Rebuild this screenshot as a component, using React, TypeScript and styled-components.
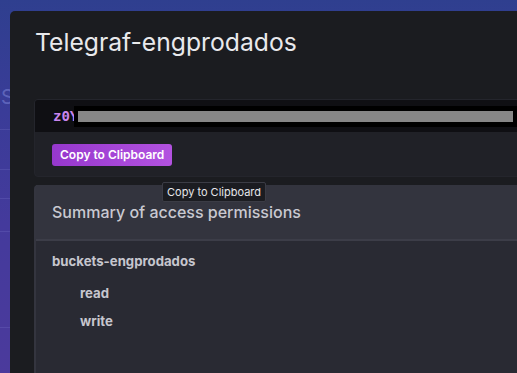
import React from "react";
import styled, { createGlobalStyle } from "styled-components";

const Global = createGlobalStyle`
  html, body { margin: 0; padding: 0; }
  body {
    width: 517px;
    height: 373px;
    overflow: hidden;
    font-family: Inter, Roboto, Arial, sans-serif;
  }
`;

const Page = styled.div`
  position: relative;
  width: 517px;
  height: 373px;
  overflow: hidden;
  background: linear-gradient(180deg, #2f3f8f 0%, #3a3c98 30%, #443a9c 60%, #4b3a9c 100%);
`;

const Backdrop = styled.div`
  display: flex;
  flex-direction: column;
  padding-top: 86px;
`;

const BackdropLabel = styled.div`
  font-size: 20px;
  color: rgba(140, 150, 230, 0.45);
  padding-left: 1px;
  height: 43px;
  line-height: 22px;
`;

const BackdropRow = styled.div<{ $h: number }>`
  height: ${(p) => p.$h}px;
  border-top: 1px solid rgba(150, 150, 230, 0.18);
`;

const Modal = styled.div`
  position: absolute;
  left: 10px;
  top: 11px;
  width: 620px;
  height: 420px;
  background: #1b1c20;
  border-radius: 5px;
  padding: 0 24px;
  box-sizing: border-box;
`;

const Header = styled.div`
  height: 88px;
  padding-top: 15px;
  box-sizing: border-box;
`;

const Title = styled.h1`
  margin: 0;
  font-weight: 400;
  font-size: 24.7px;
  line-height: 32px;
  color: #e9e9ec;
  padding-left: 1px;
`;

const CodePanel = styled.div`
  background: #202127;
  border: 1px solid #24252c;
  border-radius: 4px;
  padding-bottom: 10px;
`;

const CodeArea = styled.div`
  height: 32px;
  background: #0f0f13;
  border-radius: 3px 3px 0 0;
  display: flex;
  align-items: center;
  padding-left: 18px;
`;

const CodeText = styled.span`
  font-family: "DejaVu Sans Mono", "Liberation Mono", monospace;
  font-weight: 700;
  font-size: 14px;
  color: #c985ee;
`;

const Redaction = styled.span`
  display: flex;
  align-items: center;
  margin-left: -4px;
  flex: 1;
  height: 21px;
  background: #000;
  padding: 0 4px;
`;

const RedactBar = styled.span`
  display: block;
  width: 435px;
  height: 11px;
  background: #878787;
`;

const ButtonRow = styled.div`
  position: relative;
  padding: 11px 0 0 17px;
`;

const CopyButton = styled.button`
  height: 22px;
  padding: 0 8px;
  border: none;
  border-radius: 3px;
  background: linear-gradient(90deg, #9638cd 0%, #b352e0 100%);
  color: #ffffff;
  font-family: Inter, Roboto, Arial, sans-serif;
  font-weight: 600;
  font-size: 12px;
  cursor: pointer;
`;

const Tooltip = styled.div`
  position: absolute;
  left: 127px;
  top: 50px;
  z-index: 2;
  height: 20px;
  padding: 0 4px;
  box-sizing: border-box;
  background: #1b1c21;
  border: 1px solid #3b3c45;
  border-radius: 2px;
  color: #e6e6ea;
  font-size: 11px;
  line-height: 18px;
  white-space: nowrap;
`;

const Card = styled.div`
  margin-top: 8px;
  border-radius: 4px 4px 0 0;
  background: #292a33;
  border-left: 2px solid #34353f;
  height: 200px;
`;

const CardHeader = styled.div`
  height: 56px;
  background: #33343e;
  border-bottom: 2px solid #3c3d48;
  display: flex;
  align-items: center;
  padding-left: 16px;
  box-sizing: border-box;
`;

const CardTitle = styled.h2`
  margin: 0;
  font-weight: 500;
  font-size: 16px;
  color: #c9c9d1;
`;

const CardBody = styled.div`
  padding: 12px 16px;
  display: flex;
  flex-direction: column;
`;

const BucketName = styled.div`
  font-weight: 700;
  font-size: 13.2px;
  color: #c6c6ce;
  line-height: 16px;
`;

const PermList = styled.div`
  display: flex;
  flex-direction: column;
  gap: 12px;
  padding: 16px 0 0 28px;
`;

const Perm = styled.div`
  font-weight: 700;
  font-size: 13.2px;
  color: #c6c6ce;
  line-height: 16px;
`;

export default function App() {
  return (
    <>
      <Global />
      <Page>
        <Backdrop>
          <BackdropLabel>S</BackdropLabel>
          <BackdropRow $h={39} />
          <BackdropRow $h={28} />
          <BackdropRow $h={32} />
          <BackdropRow $h={95} />
          <BackdropRow $h={50} />
        </Backdrop>
        <Modal>
          <Header>
            <Title>Telegraf-engprodados</Title>
          </Header>
          <CodePanel>
            <CodeArea>
              <CodeText>z0Y</CodeText>
              <Redaction>
                <RedactBar />
              </Redaction>
            </CodeArea>
            <ButtonRow>
              <CopyButton>Copy to Clipboard</CopyButton>
              <Tooltip>Copy to Clipboard</Tooltip>
            </ButtonRow>
          </CodePanel>
          <Card>
            <CardHeader>
              <CardTitle>Summary of access permissions</CardTitle>
            </CardHeader>
            <CardBody>
              <BucketName>buckets-engprodados</BucketName>
              <PermList>
                <Perm>read</Perm>
                <Perm>write</Perm>
              </PermList>
            </CardBody>
          </Card>
        </Modal>
      </Page>
    </>
  );
}
